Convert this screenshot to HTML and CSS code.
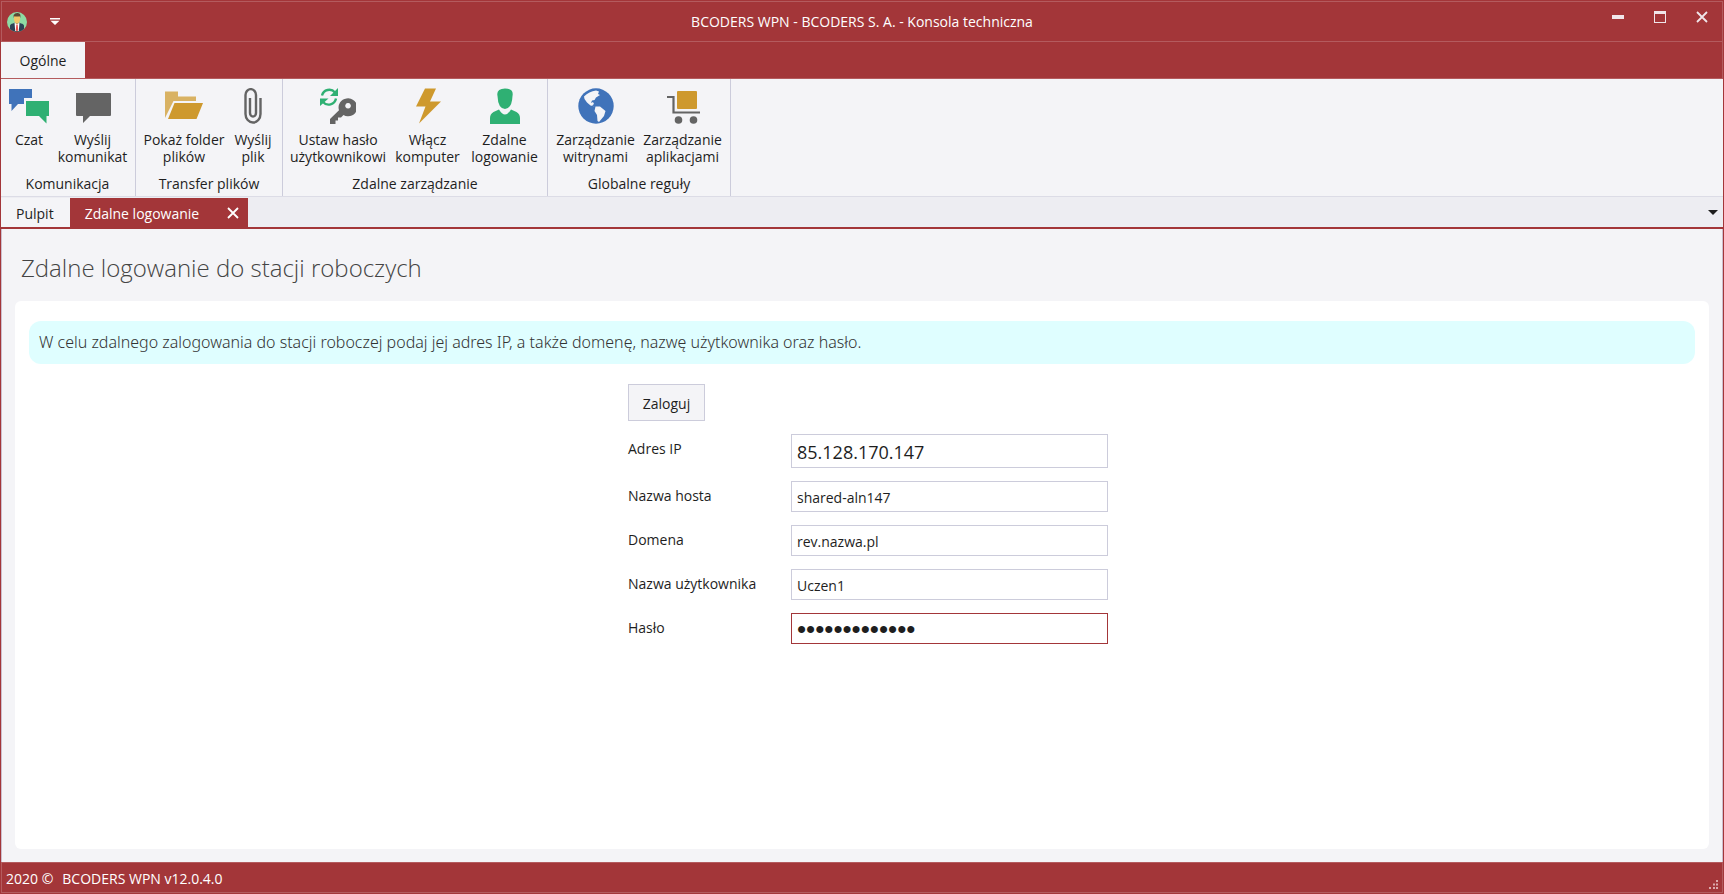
FILE: index.html
```html
<!DOCTYPE html>
<html lang="pl">
<head>
<meta charset="utf-8">
<title>BCODERS WPN - BCODERS S. A. - Konsola techniczna</title>
<link rel="stylesheet" href="styles.css">
</head>
<body>
<div class="window">
  <header class="titlebar">
    <div class="quick">
      <svg class="avatar" width="20" height="20" viewBox="0 0 20 20">
        <defs><clipPath id="disc"><circle cx="10" cy="10" r="10"/></clipPath></defs>
        <g clip-path="url(#disc)">
          <rect width="20" height="20" fill="#8edba4"/>
          <path d="M3 20V14Q3 12 6 11.500L8 10.500H12L14 11.500Q17 12 17 14V20Z" fill="#2d4256"/>
          <path d="M7.500 10.500L10 12L12.500 10.500L11.800 19H8.200Z" fill="#fff"/>
          <path d="M9.300 12.500H10.700L11.200 18L10 20L8.800 18Z" fill="#e8534f"/>
          <path d="M7 4Q10 1.500 13 4V7.500Q12.500 11.500 10 11.800Q7.500 11.500 7 7.500Z" fill="#f2c566"/>
          <path d="M6.600 6V3Q8 .8 10.500 1Q13.400 1.200 13.400 3.500V6L12.600 4.200Q10 5 7.400 4.200Z" fill="#5a4a35"/>
        </g>
      </svg>
      <button class="plain" type="button" aria-label="Dostosuj pasek">
        <svg width="10" height="7" viewBox="0 0 10 7"><path d="M0 0H10V1.500H0ZM.5 2.800H9.500L5 7Z" fill="#fff"/></svg>
      </button>
    </div>
    <h1 class="caption">BCODERS WPN - BCODERS S. A. - Konsola techniczna</h1>
    <div class="controls">
      <button class="plain" type="button" aria-label="Minimalizuj"><svg width="12" height="12" viewBox="0 0 12 12"><path d="M0 4H12V8H0Z" fill="#f0e6ea"/></svg></button>
      <button class="plain" type="button" aria-label="Maksymalizuj"><svg width="12" height="12" viewBox="0 0 12 12"><path fill-rule="evenodd" d="M0 0H12V12H0ZM1 3V11H11V3Z" fill="#f0e6ea"/></svg></button>
      <button class="plain" type="button" aria-label="Zamknij"><svg width="12" height="12" viewBox="0 0 12 12"><path d="M1 1L11 11M11 1L1 11" stroke="#f0e6ea" stroke-width="1.800"/></svg></button>
    </div>
  </header>

  <nav class="ribbon-tabs"><button class="ribbon-tab" type="button">Ogólne</button></nav>

  <section class="ribbon">
    <div class="group">
      <div class="tools">
        <button class="tool w-xs" type="button">
          <svg width="40" height="36" viewBox="0 0 40 36"><path d="M0 1H23V10H15V16H9L2.500 23V16H0Z" fill="#4073ba"/><path d="M17 13H40V28H37.500V35.500L30 28H17Z" fill="#2fb073"/></svg>
          <span>Czat</span>
        </button>
        <button class="tool w-md" type="button">
          <svg width="36" height="36" viewBox="0 0 36 36"><path d="M1 5H35Q36 5 36 6V27Q36 28 35 28H15L8 35V28H2Q1 28 1 27Z" fill="#646464"/></svg>
          <span>Wyślij<br>komunikat</span>
        </button>
      </div>
      <div class="group-name">Komunikacja</div>
    </div>
    <div class="group">
      <div class="tools">
        <button class="tool w-xl" type="button">
          <svg width="38" height="36" viewBox="0 0 38 36"><path d="M0 30V3.500H13V8.500H31V13H8.500Z" fill="#d9b263"/><path d="M9.500 15H38L31.500 31H3Z" fill="#ce992e"/></svg>
          <span>Pokaż folder<br>plików</span>
        </button>
        <button class="tool w-xs" type="button">
          <svg width="20" height="36" viewBox="0 0 20 36"><path d="M17.500 10V26A7.500 8.500 0 0 1 2.500 26V7A5.200 5.800 0 0 1 13 7V25A3 3.600 0 0 1 7 25V10" fill="none" stroke="#646464" stroke-width="2.400"/></svg>
          <span>Wyślij<br>plik</span>
        </button>
      </div>
      <div class="group-name">Transfer plików</div>
    </div>
    <div class="group">
      <div class="tools">
        <button class="tool w-xxl" type="button">
          <svg width="36" height="36" viewBox="0 0 36 36"><path d="M2 7.500A7.500 7.500 0 0 1 15 4.500M16 10.500A7.500 7.500 0 0 1 3 14" fill="none" stroke="#2fb073" stroke-width="2.400"/><path d="M18 0V8H10ZM0 10.500H8.500L0 18Z" fill="#2fb073"/><path fill-rule="evenodd" d="M26.500 10.500A9 9 0 1 1 23.500 27L21 29.500H18V32.500H15.500V36H10V31L19 22.200A9 9 0 0 1 26.500 10.500ZM28 15A2.800 2.800 0 1 0 28.100 15Z" fill="#646464"/></svg>
          <span>Ustaw hasło<br>użytkownikowi</span>
        </button>
        <button class="tool w-md" type="button">
          <svg width="26" height="36" viewBox="0 0 26 36"><path d="M10 .5H21L15 13.500H26L4 35.500L10.500 18.500H1Z" fill="#ce992e"/></svg>
          <span>Włącz<br>komputer</span>
        </button>
        <button class="tool w-md" type="button">
          <svg width="32" height="36" viewBox="0 0 32 36"><path d="M8.500 8Q7 .8 16 .5Q25 .8 23.500 8Q23 20.500 16 21Q9 20.500 8.500 8ZM10 21.500Q13 26.500 16 26.500Q19 26.500 22 21.500L27.500 24Q31 26 31 30V36H1V30Q1 26 4.500 24Z" fill="#2fb073"/></svg>
          <span>Zdalne<br>logowanie</span>
        </button>
      </div>
      <div class="group-name">Zdalne zarządzanie</div>
    </div>
    <div class="group">
      <div class="tools">
        <button class="tool w-lg" type="button">
          <svg width="36" height="36" viewBox="0 0 36 36"><circle cx="18" cy="18" r="17.700" fill="#4073ba"/><path d="M6 8.500Q11 3.500 18 2.500L21 3.500L20 6L22 7L18 9.500L16.500 12L14 12.500L13 15L15 14L16 16L14 17.500L17 18.500L12.500 17.500L9 14.500L6.500 11ZM17.500 18.500L22 18.500L27.500 23L26 28L21 34L19.500 33L19 27L16.500 23Z" fill="#f4f4f7"/></svg>
          <span>Zarządzanie<br>witrynami</span>
        </button>
        <button class="tool w-lg" type="button">
          <svg width="34" height="36" viewBox="0 0 34 36"><rect x="11" y="3" width="20" height="18" rx="1" fill="#ce992e"/><path d="M1 9H7.500V24.500H34" fill="none" stroke="#646464" stroke-width="2.200"/><circle cx="12.500" cy="32" r="3.800" fill="#646464"/><circle cx="27.500" cy="32" r="3.800" fill="#646464"/></svg>
          <span>Zarządzanie<br>aplikacjami</span>
        </button>
      </div>
      <div class="group-name">Globalne reguły</div>
    </div>
  </section>

  <nav class="doc-tabs">
    <button class="doc-tab" type="button">Pulpit</button>
    <div class="doc-tab active">
      <button class="doc-name" type="button">Zdalne logowanie</button>
      <button class="plain" type="button" aria-label="Zamknij kartę"><svg width="12" height="12" viewBox="0 0 12 12"><path d="M1 1L11 11M11 1L1 11" stroke="#fff" stroke-width="1.800"/></svg></button>
    </div>
    <button class="plain more" type="button" aria-label="Lista kart"><svg width="10" height="5" viewBox="0 0 10 5"><path d="M0 0H10L5 5Z" fill="#1e1e1e"/></svg></button>
  </nav>

  <main class="content">
    <h2 class="heading">Zdalne logowanie do stacji roboczych</h2>
    <section class="panel">
      <p class="info">W celu zdalnego zalogowania do stacji roboczej podaj jej adres IP, a także domenę, nazwę użytkownika oraz hasło.</p>
      <form class="form">
        <button class="submit" type="button">Zaloguj</button>
        <label for="ip">Adres IP</label><input class="field large" id="ip" type="text" value="85.128.170.147">
        <label for="host">Nazwa hosta</label><input class="field" id="host" type="text" value="shared-aln147">
        <label for="domain">Domena</label><input class="field" id="domain" type="text" value="rev.nazwa.pl">
        <label for="user">Nazwa użytkownika</label><input class="field" id="user" type="text" value="Uczen1">
        <label for="pass">Hasło</label><input class="field focused" id="pass" type="password" value="haslohaslo123">
      </form>
    </section>
  </main>

  <footer class="status">
    <span>2020 ©</span><span>BCODERS WPN v12.0.4.0</span>
    <svg class="grip" width="9" height="9" viewBox="0 0 9 9"><path d="M7 0h2v2h-2zM4 3.500h2v2h-2zM7 3.500h2v2h-2zM0 7h2v2h-2zM4 7h2v2h-2zM7 7h2v2h-2z" fill="#dba9ab"/></svg>
  </footer>
</div>
</body>
</html>
```
FILE: styles.css
```css
* { box-sizing: border-box; }

body {
  margin: 0;
  font-family: "Open Sans", "Noto Sans", sans-serif;
  font-size: 14px;
  line-height: 17px;
  color: #1e1e1e;
}

button, input { font: inherit; color: inherit; }

.plain {
  display: flex;
  padding: 0;
  border: 0;
  background: none;
}

.window {
  display: flex;
  flex-direction: column;
  min-height: 100vh;
  border: 1px solid #a33639;
  background: #f4f4f7;
}

.titlebar {
  display: grid;
  grid-template-columns: 1fr auto 1fr;
  height: 41px;
  border: 1px solid #b45b5e;
  background: #a33639;
  color: #fff;
}

.quick {
  display: flex;
  align-items: center;
  gap: 23px;
  padding-left: 5px;
}

.caption {
  margin: 0;
  align-self: center;
  font-size: 14px;
  font-weight: 400;
}

.controls {
  display: flex;
  justify-content: flex-end;
  gap: 30px;
  padding: 9px 14px 0 0;
}

.ribbon-tabs {
  display: flex;
  height: 37px;
  background: #a33639;
  border-right: 1px solid #b45b5e;
  border-bottom: 1px solid #b45b5e;
}

.ribbon-tab {
  width: 84px;
  padding: 0;
  border: 0;
  background: #f4f4f7;
}

.ribbon {
  display: flex;
  border-bottom: 1px solid #dcdce6;
}

.group {
  padding: 9px 4px 4px;
  border-right: 1px solid #ccccdb;
}

.group:first-child { padding-left: 3px; }

.tools {
  display: flex;
  height: 87px;
}

.tool {
  display: flex;
  flex-direction: column;
  align-items: center;
  gap: 7px;
  padding: 0;
  border: 0;
  background: none;
  white-space: nowrap;
}

.w-xs { width: 50px; }
.w-md { width: 77px; }
.w-lg { width: 87px; }
.w-xl { width: 88px; }
.w-xxl { width: 102px; }

.group-name { text-align: center; }

.doc-tabs {
  display: flex;
  height: 32px;
  padding-top: 1px;
  border-bottom: 2px solid #a33639;
  background: #ededf2;
}

.doc-tab {
  display: flex;
  align-items: center;
  padding: 1px 16px 0 15px;
  border: 0;
  background: #f4f4f7;
}

.doc-tab.active {
  gap: 28px;
  padding: 1px 9px 0 15px;
  background: #a33639;
  color: #fff;
}

.doc-name {
  padding: 0;
  border: 0;
  background: none;
}

.more {
  align-items: center;
  margin-left: auto;
  padding-right: 5px;
}

.content {
  display: flex;
  flex: 1;
  flex-direction: column;
  padding: 0 13px 13px;
  border: solid #ccbfcf;
  border-width: 0 1px;
}

.heading {
  margin: 22px 6px 16px;
  font-size: 24px;
  font-weight: 300;
  line-height: 34px;
  color: #444;
}

.panel {
  flex: 1;
  padding: 20px 14px;
  border-radius: 6px;
  background: #fff;
}

.info {
  margin: 0 0 20px;
  padding: 10px;
  border-radius: 12px;
  background: #dffeff;
  font-family: "Noto Sans", "Open Sans", sans-serif;
  font-size: 16px;
  font-weight: 300;
  line-height: 23px;
  color: #333;
}

.form {
  display: grid;
  grid-template-columns: 163px 317px;
  justify-content: center;
  row-gap: 13px;
  padding-left: 12px;
}

.form label { padding-top: 6px; }

.submit {
  grid-column: 1 / 3;
  justify-self: start;
  width: 77px;
  height: 37px;
  padding: 1px 0 0;
  border: 1px solid #ccccdb;
  background: #f4f4f7;
}

.field {
  width: 100%;
  height: 31px;
  padding: 2px 5px 0;
  border: 1px solid #ccccdb;
  background: #fff;
  outline: none;
}

.field.large {
  height: 34px;
  font-size: 18px;
}

.field.focused {
  border-color: #a33639;
  font-family: "Liberation Sans", sans-serif;
  font-size: 26px;
}

.status {
  display: flex;
  align-items: center;
  gap: 9px;
  height: 31px;
  padding: 1px 4px 0;
  border: 1px solid #b45b5e;
  background: #a33639;
  color: #fff;
}

.grip {
  align-self: flex-end;
  margin: 0 0 3px auto;
}
```
